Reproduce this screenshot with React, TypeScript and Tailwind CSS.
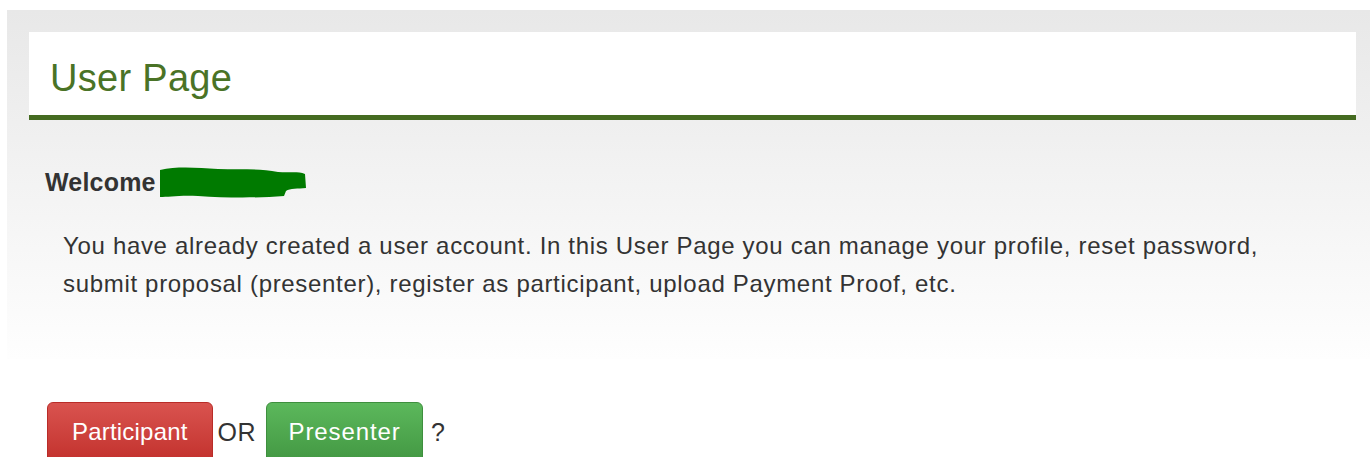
import React from "react";

// redacted user name, drawn as a marker smear
const NameSmear = () => (
  <svg width="150" height="34" viewBox="0 0 150 34" className="ml-[2px]">
    <path
      d="M2 5 C20 1 40 3 60 4 C80 5 100 3 120 7 C132 8 140 6 147 9 L148 23 C140 24 132 23 128 26 L126 31 C100 33 70 33 40 31 C22 30 10 32 2 32 Z"
      fill="#007a00"
    />
  </svg>
);

const App = () => {
  return (
    <div className="bg-white h-[457px] overflow-hidden pt-[10px] font-['Liberation_Sans',Arial,sans-serif] text-[#333]">
      <div className="ml-[7px] w-[1363px] h-[349px] bg-linear-to-b from-[#e8e8e8] to-[#fefefe] pt-[22px]">
        {/* HEADING */}
        <div className="ml-[22px] w-[1327px] h-[88px] bg-white border-b-[5px] border-[#456b21] pl-[21px] flex items-center">
          <h1 className="text-[38px] leading-none text-[#4a7326] mt-[8px] tracking-[0.3px]">User Page</h1>
        </div>

        <div className="pl-[38px] mt-[45px] flex items-center h-[34px]">
          <strong className="text-[25px] leading-none font-bold tracking-[0.2px]">Welcome</strong>
          <NameSmear />
        </div>

        <p className="pl-[56px] mt-[28px] text-[24px] leading-[38px] tracking-[0.68px]">
          You have already created a user account. In this User Page you can manage your profile, reset password,
          <br />
          submit proposal (presenter), register as participant, upload Payment Proof, etc.
        </p>
      </div>

      <div className="pl-[47px] mt-[43px] flex items-start text-[24px]">
        <button className="h-[64px] px-[24px] rounded-[6px] border border-[#b92c28] bg-linear-to-b from-[#d9534f] to-[#c12e2a] text-white text-[24px] tracking-[0.2px] pb-[5px]">
          Participant
        </button>
        <span className="pl-[5px] pr-[10px] pt-[18px] text-[25px] leading-none tracking-[0.5px]">OR</span>
        <button className="h-[64px] w-[157px] rounded-[6px] border border-[#3e8f3e] bg-linear-to-b from-[#5cb85c] to-[#419641] text-white text-[24px] tracking-[0.9px] pb-[5px]">
          Presenter
        </button>
        <span className="pl-[8px] pt-[18px] text-[25px] leading-none">?</span>
      </div>
    </div>
  );
};

export default App;
